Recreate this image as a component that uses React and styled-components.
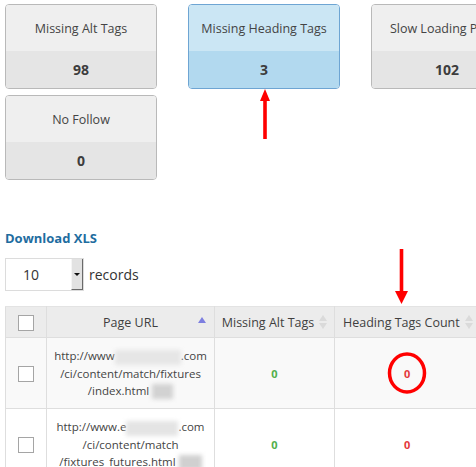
import React from "react"
import styled, { createGlobalStyle } from "styled-components"

const GlobalStyle = createGlobalStyle`
  body {
    margin: 0;
    background: #fff;
    font-family: "Open Sans", "DejaVu Sans", sans-serif;
    color: #444;
  }
`

const Page = styled.div`
  position: relative;
  width: 476px;
  height: 467px;
  overflow: hidden;
  padding: 4px 0 0 5px;
  box-sizing: border-box;
`

const Cards = styled.div`
  display: flex;
  flex-wrap: wrap;
  width: 560px;
  gap: 6px 31px;
`

const Card = styled.div`
  width: 152px;
  height: 85px;
  box-sizing: border-box;
  border: 1px solid ${(p) => (p.active ? "#6ea5d3" : "#b9b9b9")};
  border-radius: 4px;
  overflow: hidden;
  display: flex;
  flex-direction: column;
`

const CardLabel = styled.div`
  height: 46px;
  display: flex;
  align-items: center;
  justify-content: center;
  font-size: 12.5px;
  color: #444;
  white-space: nowrap;
  background: ${(p) => (p.active ? "#cbe6f4" : "#efefef")};
`

const CardValue = styled.div`
  flex: 1;
  display: flex;
  align-items: center;
  justify-content: center;
  font-size: 14px;
  font-weight: 700;
  color: #3d3d3d;
  background: ${(p) => (p.active ? "#b2d9ef" : "#e5e5e5")};
`

const DownloadLink = styled.a`
  display: block;
  margin-top: 49px;
  font-size: 13px;
  font-weight: 700;
  color: #1f6d9f;
  text-decoration: none;
`

const LengthRow = styled.div`
  display: flex;
  align-items: center;
  gap: 5px;
  margin-top: 11px;
  font-size: 14px;
  color: #333;
`

const SelectBox = styled.div`
  width: 79px;
  height: 33px;
  box-sizing: border-box;
  border: 1px solid #dcdcdc;
  display: flex;
  align-items: stretch;
`

const SelectValue = styled.span`
  flex: 1;
  display: flex;
  align-items: center;
  padding-left: 17px;
  font-size: 14px;
  color: #333;
`

const SelectArrow = styled.span`
  width: 12px;
  box-sizing: border-box;
  background: #e2e2e2;
  border-left: 1px solid #f5f5f5;
  border-right: 1px solid #6a6a6a;
  border-bottom: 1px solid #6a6a6a;
  display: flex;
  align-items: center;
  justify-content: center;

  &::after {
    content: "";
    border-left: 3px solid transparent;
    border-right: 3px solid transparent;
    border-top: 3px solid #111;
  }
`

const Table = styled.table`
  margin-top: 15px;
  border-collapse: collapse;
  table-layout: fixed;
  width: 560px;
  font-size: 11.5px;
`

const Th = styled.th`
  height: 31px;
  padding: 0 4px;
  box-sizing: border-box;
  background: #ececec;
  border: 1px solid #dedede;
  border-top: 1px solid #e3e3e3;
  font-size: 12.5px;
  font-weight: 400;
  color: #3f3f3f;
  text-align: ${(p) => p.align || "center"};
  padding-left: ${(p) => p.indent || 4}px;
  white-space: nowrap;
  position: relative;
`

const HeadInner = styled.span`
  display: inline-flex;
  align-items: center;
  gap: 5px;
`

const Tr = styled.tr`
  background: ${(p) => (p.striped ? "#f9f9f9" : "#fff")};
`

const Td = styled.td`
  height: 70px;
  padding: 0 4px;
  padding-left: ${(p) => p.indent || 4}px;
  border: 1px solid #dedede;
  text-align: ${(p) => p.align || "center"};
  vertical-align: middle;
  color: #444;
  line-height: 17px;
  white-space: nowrap;
`

const Check = styled.span`
  display: inline-block;
  width: 14px;
  height: 14px;
  border: 1px solid #a5a5a5;
  background: #fff;
  vertical-align: middle;
`

const Blur = styled.span`
  display: inline-block;
  width: ${(p) => p.w}px;
  height: 15px;
  vertical-align: middle;
  background: ${(p) => p.tone || "#e3e3e3"};
  filter: blur(2px);
`

const Count = styled.span`
  font-size: 11px;
  font-weight: 700;
  color: ${(p) => (p.bad ? "#e4393c" : "#52b04c")};
`

const SortUp = () => (
  <svg width="8" height="6" viewBox="0 0 8 6" style={{ position: "absolute", right: 8, top: 10 }}>
    <path d="M4 0 L8 6 L0 6 Z" fill="#7d7fe0" />
  </svg>
)

const SortBoth = () => (
  <svg width="8" height="14" viewBox="0 0 8 14">
    <path d="M4 0 L8 6 L0 6 Z" fill="#dadada" />
    <path d="M4 14 L8 8 L0 8 Z" fill="#dadada" />
  </svg>
)

const Overlay = styled.svg`
  position: absolute;
  left: 0;
  top: 0;
  pointer-events: none;
`

const cards = [
  { label: "Missing Alt Tags", value: 98 },
  { label: "Missing Heading Tags", value: 3, active: true },
  { label: "Slow Loading Pages", value: 102 },
  { label: "No Follow", value: 0 },
]

const App = () => {
  return (
    <>
      <GlobalStyle />
      <Page>
        <Cards>
          {cards.map((c) => (
            <Card key={c.label} active={c.active}>
              <CardLabel active={c.active}>{c.label}</CardLabel>
              <CardValue active={c.active}>{c.value}</CardValue>
            </Card>
          ))}
        </Cards>

        <DownloadLink href="#">Download XLS</DownloadLink>

        <LengthRow>
          <SelectBox>
            <SelectValue>10</SelectValue>
            <SelectArrow />
          </SelectBox>
          records
        </LengthRow>

        <Table>
          <colgroup>
            <col style={{ width: 41 }} />
            <col style={{ width: 168 }} />
            <col style={{ width: 120 }} />
            <col style={{ width: 231 }} />
          </colgroup>
          <thead>
            <tr>
              <Th>
                <Check />
              </Th>
              <Th>
                Page URL
                <SortUp />
              </Th>
              <Th>
                <HeadInner>
                  Missing Alt Tags <SortBoth />
                </HeadInner>
              </Th>
              <Th align="left" indent={8}>
                <HeadInner>
                  Heading Tags Count <SortBoth />
                </HeadInner>
              </Th>
            </tr>
          </thead>
          <tbody>
            <Tr striped>
              <Td>
                <Check />
              </Td>
              <Td>
                http://www<Blur w={66} tone="#e6e6e6" />.com
                <br />
                /ci/content/match/fixtures
                <br />
                /index.html <Blur w={21} tone="#d2d2d2" />
              </Td>
              <Td>
                <Count>0</Count>
              </Td>
              <Td align="left" indent={69}>
                <Count bad>0</Count>
              </Td>
            </Tr>
            <Tr>
              <Td>
                <Check />
              </Td>
              <Td>
                http://www.e<Blur w={52} tone="#e4e4e4" />.com
                <br />
                /ci/content/match
                <br />
                /fixtures_futures.html <Blur w={23} tone="#d0d0d0" />
              </Td>
              <Td>
                <Count>0</Count>
              </Td>
              <Td align="left" indent={69}>
                <Count bad>0</Count>
              </Td>
            </Tr>
          </tbody>
        </Table>

        <Overlay width="476" height="467" viewBox="0 0 476 467">
          <rect x="263.2" y="100" width="3.6" height="39" fill="#ff0000" />
          <path d="M265 89 L270 101 L260 101 Z" fill="#ff0000" />
          <rect x="399.7" y="249" width="3.6" height="44" fill="#ff0000" />
          <path d="M401.5 304 L408 291 L395 291 Z" fill="#ff0000" />
          <ellipse cx="407" cy="373" rx="17.5" ry="19" fill="none" stroke="#ff0000" strokeWidth="3.5" />
        </Overlay>
      </Page>
    </>
  )
}

export default App
